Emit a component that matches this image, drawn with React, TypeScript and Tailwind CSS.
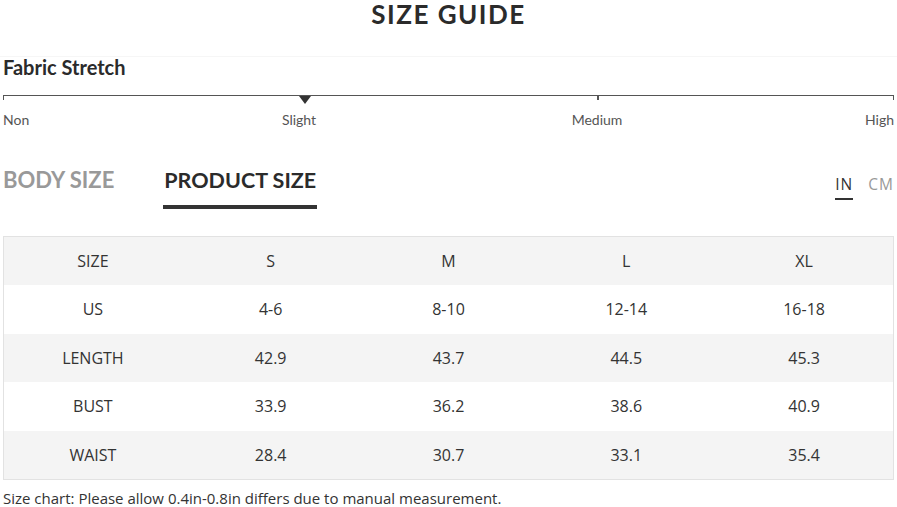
const columns = ["SIZE", "S", "M", "L", "XL"];

const rows = [
  ["US", "4-6", "8-10", "12-14", "16-18"],
  ["LENGTH", "42.9", "43.7", "44.5", "45.3"],
  ["BUST", "33.9", "36.2", "38.6", "40.9"],
  ["WAIST", "28.4", "30.7", "33.1", "35.4"],
];

function StretchScale() {
  return (
    <div className="mx-[3px] mt-[18px]">
      <div className="relative h-[8px] border-t border-[#555]">
        <span className="absolute left-0 top-0 h-[4px] w-px bg-[#555]" />
        <span className="absolute left-[594px] top-0 h-[4px] w-[2px] bg-[#555]" />
        <span className="absolute right-0 top-0 h-[4px] w-px bg-[#555]" />
        <span className="absolute left-[296px] top-0 h-0 w-0 border-x-[6px] border-t-[8px] border-x-transparent border-t-[#333]" />
      </div>
      <div className="relative mt-[8px] h-[18px] text-[14px] leading-[18px] text-[#555]">
        <span className="absolute left-0">Non</span>
        <span className="absolute left-[296px] -translate-x-1/2">Slight</span>
        <span className="absolute left-[594px] -translate-x-1/2">Medium</span>
        <span className="absolute right-0">High</span>
      </div>
    </div>
  );
}

export default function App() {
  return (
    <div className="w-[897px] h-[507px] overflow-hidden bg-white font-['Lato','Open_Sans',sans-serif] text-[#333]">
      <h1 className="pt-[1px] text-center text-[26px] font-bold leading-[26px] tracking-[1.5px] text-[#2b2b2b]">
        SIZE GUIDE
      </h1>

      <div className="mt-[29px] border-t border-[#f6f6f6]">
        <h2 className="px-[3px] text-[20px] font-bold leading-[20px] text-[#2b2b2b]">
          Fabric Stretch
        </h2>
        <StretchScale />
      </div>

      <div className="mt-[38px] flex items-start justify-between px-[3px]">
        <div className="flex gap-[50px]">
          <div className="text-[22px] font-bold leading-[26px] text-[#999]">BODY SIZE</div>
          <div className="flex flex-col">
            <div className="text-[21.5px] font-bold leading-[26px] text-[#2b2b2b]">PRODUCT SIZE</div>
            <div className="mx-[-1px] mt-[12px] h-[4px] bg-[#333]" />
          </div>
        </div>
        <div className="mt-[8px] flex gap-[15px] font-['Open_Sans',sans-serif] text-[15.5px] leading-[18px] tracking-[1px]">
          <div className="flex flex-col">
            <span className="text-[#333]">IN</span>
            <span className="mt-[5px] h-[2px] bg-[#333]" />
          </div>
          <span className="text-[#999]">CM</span>
        </div>
      </div>

      <div className="mx-[3px] mt-[27px] border border-[#e2e2e2] font-['Open_Sans',sans-serif] text-[16px] text-[#333]">
        <div className="grid h-[48px] grid-cols-5 items-center bg-[#f4f4f4] text-center">
          {columns.map((c) => (
            <div key={c}>{c}</div>
          ))}
        </div>
        {rows.map((r, i) => (
          <div
            key={r[0]}
            className={`grid h-[48.5px] grid-cols-5 items-center text-center ${i % 2 === 1 ? "bg-[#f4f4f4]" : "bg-white"}`}
          >
            {r.map((v, j) => (
              <div key={j}>{v}</div>
            ))}
          </div>
        ))}
      </div>

      <p className="mt-[11px] px-[3px] font-['Open_Sans',sans-serif] text-[15px] leading-[15px] text-[#333]">
        Size chart: Please allow 0.4in-0.8in differs due to manual measurement.
      </p>
    </div>
  );
}
